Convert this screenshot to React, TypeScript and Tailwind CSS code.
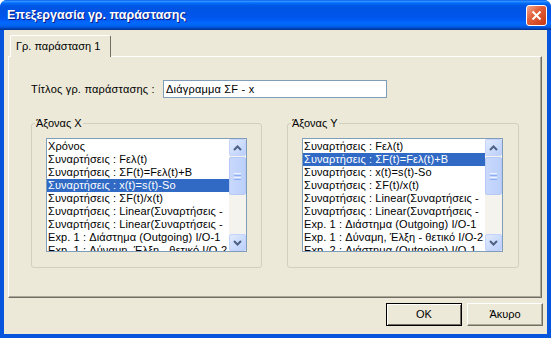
import clsx from "clsx";

const xItems = [
  "Χρόνος",
  "Συναρτήσεις : Fελ(t)",
  "Συναρτήσεις : ΣF(t)=Fελ(t)+B",
  "Συναρτήσεις : x(t)=s(t)-So",
  "Συναρτήσεις : ΣF(t)/x(t)",
  "Συναρτήσεις : Linear(Συναρτήσεις -",
  "Συναρτήσεις : Linear(Συναρτήσεις -",
  "Exp. 1 : Διάστημα (Outgoing) I/O-1",
  "Exp. 1 : Δύναμη, Έλξη - θετικό I/O-2",
];

const yItems = [
  "Συναρτήσεις : Fελ(t)",
  "Συναρτήσεις : ΣF(t)=Fελ(t)+B",
  "Συναρτήσεις : x(t)=s(t)-So",
  "Συναρτήσεις : ΣF(t)/x(t)",
  "Συναρτήσεις : Linear(Συναρτήσεις -",
  "Συναρτήσεις : Linear(Συναρτήσεις -",
  "Exp. 1 : Διάστημα (Outgoing) I/O-1",
  "Exp. 1 : Δύναμη, Έλξη - θετικό I/O-2",
  "Exp. 2 : Διάστημα (Outgoing) I/O-1",
];

function Chevron({ up }: { up?: boolean }) {
  return (
    <svg width="9" height="6" viewBox="0 0 9 6">
      <path
        d={up ? "M1 5 L4.5 1.5 L8 5" : "M1 1 L4.5 4.5 L8 1"}
        fill="none"
        stroke="#4d6185"
        strokeWidth="2"
      />
    </svg>
  );
}

function ScrollButton({ up }: { up?: boolean }) {
  return (
    <div className="flex h-[17px] w-[17px] items-center justify-center rounded-[2px] border border-[#c3d3fd] bg-[linear-gradient(135deg,#e1eafe,#b9cffb)]">
      <Chevron up={up} />
    </div>
  );
}

function Scrollbar() {
  return (
    <div className="flex w-[17px] shrink-0 flex-col bg-[#f4f3ee]">
      <ScrollButton up />
      <div className="flex-1">
        <div className="mt-px flex h-[38px] flex-col items-center justify-center gap-px rounded-[2px] border border-[#b5c9f7] bg-[linear-gradient(to_right,#c9d8fc,#bcd0fb)]">
          <div className="h-px w-[7px] bg-[#eef4fe]" />
          <div className="h-px w-[7px] bg-[#8cb0f8]" />
          <div className="h-px w-[7px] bg-[#eef4fe]" />
          <div className="h-px w-[7px] bg-[#8cb0f8]" />
        </div>
      </div>
      <ScrollButton />
    </div>
  );
}

function ListBox({ items, selected }: { items: string[]; selected: number }) {
  return (
    <div className="flex h-[114px] w-[201px] border border-[#7f9db9] bg-white">
      <div className="flex min-w-0 flex-1 flex-col overflow-hidden pt-px">
        {items.map((t, i) => (
          <div
            key={i}
            className={clsx(
              "h-[13px] shrink-0 whitespace-nowrap pl-px text-[11px] leading-[13px] tracking-[0.1px]",
              i === selected ? "bg-[#316ac5] text-white" : "text-black",
            )}
          >
            {t}
          </div>
        ))}
      </div>
      <Scrollbar />
    </div>
  );
}

function Group({
  label,
  width,
  children,
}: {
  label: string;
  width: string;
  children: React.ReactNode;
}) {
  return (
    <div
      className={clsx(
        "relative h-[145px] rounded-[3px] border border-[#d0d0bf] pl-[14px] pt-[14px]",
        width,
      )}
    >
      <span className="absolute -top-[7px] left-[3px] bg-[#ece9d8] px-px text-[11px] leading-[13px] text-black">
        {label}
      </span>
      {children}
    </div>
  );
}

export default function App() {
  return (
    <div className="flex h-[338px] w-[551px] flex-col overflow-hidden rounded-t-[7px] bg-[#0855dd] font-['Liberation_Sans',Arial,sans-serif]">
      <div className="flex h-[30px] shrink-0 items-center justify-between bg-[linear-gradient(to_bottom,#0058ee_0%,#3593ff_4%,#288eff_6%,#127dff_8%,#036ffc_10%,#0262ee_14%,#0057e5_20%,#0054e3_24%,#0055eb_56%,#005bf5_66%,#026afe_76%,#0062ef_86%,#0052d6_92%,#0040ab_96%,#003092_100%)] pl-[7px] pr-[4px]">
        <span className="text-[12.5px] font-bold text-white [text-shadow:1px_1px_0_#0a1883]">
          Επεξεργασία γρ. παράστασης
        </span>
        <div className="flex h-[21px] w-[21px] items-center justify-center rounded-[3px] border border-white bg-[linear-gradient(135deg,#f0a88f_0%,#e3613b_40%,#c7380f_100%)]">
          <svg width="11" height="11" viewBox="0 0 11 11">
            <path d="M1.5 1.5 L9.5 9.5 M9.5 1.5 L1.5 9.5" stroke="white" strokeWidth="2" />
          </svg>
        </div>
      </div>

      <div className="flex flex-1 flex-col px-[4px] pb-[4px]">
        <div className="flex flex-1 flex-col bg-[#ece9d8] pt-[5px] text-[11px] text-black">
          <div className="flex pl-[6px]">
            <div className="relative z-10 -mb-px flex h-[22px] w-[101px] items-start rounded-t-[2px] border-l border-r border-t border-l-white border-r-[#716f64] border-t-white bg-[#ece9d8] pl-[5px] pt-[4px] leading-[13px]">
              Γρ. παράσταση 1
            </div>
          </div>

          <div className="ml-[4px] flex h-[242px] w-[534px] flex-col border border-b-[#716f64] border-l-white border-r-[#716f64] border-t-white pl-[22px] pt-[23px] shadow-[inset_-1px_-1px_0_#aca899]">
            <div className="flex items-center">
              <span className="w-[132px] leading-[13px] tracking-[0.2px]">Τίτλος γρ. παράστασης :</span>
              <div className="flex h-[18px] w-[224px] items-center border border-[#7f9db9] bg-white pl-[2px] leading-[13px] tracking-[0.2px]">
                Διάγραμμα ΣF - x
              </div>
            </div>

            <div className="mt-[25px] flex gap-[25px]">
              <Group label="Άξονας X" width="w-[231px]">
                <ListBox items={xItems} selected={3} />
              </Group>
              <Group label="Άξονας Y" width="w-[232px]">
                <ListBox items={yItems} selected={1} />
              </Group>
            </div>
          </div>

          <div className="mt-[5px] flex justify-end gap-[5px] pr-[4px]">
            <button
              type="button"
              className="flex h-[23px] w-[76px] items-center justify-center border border-black bg-[#ece9d8] shadow-[inset_1px_1px_0_#fff,inset_-1px_-1px_0_#716f64] leading-[13px]"
            >
              OK
            </button>
            <button
              type="button"
              className="flex h-[23px] w-[76px] items-center justify-center border border-b-[#716f64] border-l-white border-r-[#716f64] border-t-white bg-[#ece9d8] shadow-[inset_-1px_-1px_0_#aca899] leading-[13px]"
            >
              Άκυρο
            </button>
          </div>
        </div>
      </div>
    </div>
  );
}
